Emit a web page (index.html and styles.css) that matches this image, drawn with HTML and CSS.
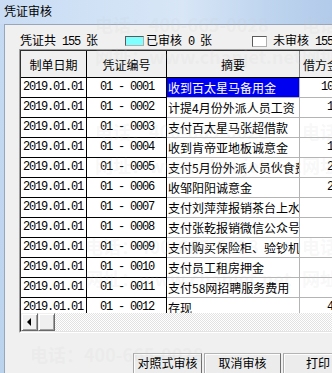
FILE: index.html
```html
<!DOCTYPE html>
<html>
<head>
<meta charset="utf-8">
<link rel="stylesheet" href="styles.css">
</head>
<body>
<div class="window">
  <div class="titlebar">凭证审核</div>
  <div class="client">
    <div class="legend">
      <span class="total">凭证共<span class="n"> 155 </span>张</span>
      <span class="swatch cyan"></span>
      <span class="lbl1">已审核<span class="n"> 0 </span>张</span>
      <span class="swatch white"></span>
      <span class="lbl2">未审核<span class="n"> 155 </span>张</span>
    </div>
    <div class="grid-outer">
      <div class="grid-inner">
        <div class="hdr">
          <div class="h h1">制单日期</div>
          <div class="h h2">凭证编号</div>
          <div class="h h3">摘要</div>
          <div class="h h4">借方金额</div>
        </div>
        <div class="rows">
          <div class="row"><div class="c c1">2019.01.01</div><div class="c c2">01 - 0001</div><div class="c c3 sel">收到百太星马备用金</div><div class="c c4">10000.00</div></div>
          <div class="row"><div class="c c1">2019.01.01</div><div class="c c2">01 - 0002</div><div class="c c3">计提4月份外派人员工资</div><div class="c c4">1500.00</div></div>
          <div class="row"><div class="c c1">2019.01.01</div><div class="c c2">01 - 0003</div><div class="c c3">支付百太星马张超借款</div><div class="c c4"></div></div>
          <div class="row"><div class="c c1">2019.01.01</div><div class="c c2">01 - 0004</div><div class="c c3">收到肯帝亚地板诚意金</div><div class="c c4">1000.00</div></div>
          <div class="row"><div class="c c1">2019.01.01</div><div class="c c2">01 - 0005</div><div class="c c3">支付5月份外派人员伙食费</div><div class="c c4">2400.00</div></div>
          <div class="row"><div class="c c1">2019.01.01</div><div class="c c2">01 - 0006</div><div class="c c3">收邹阳阳诚意金</div><div class="c c4">2000.00</div></div>
          <div class="row"><div class="c c1">2019.01.01</div><div class="c c2">01 - 0007</div><div class="c c3">支付刘萍萍报销茶台上水费</div><div class="c c4"></div></div>
          <div class="row"><div class="c c1">2019.01.01</div><div class="c c2">01 - 0008</div><div class="c c3">支付张乾报销微信公众号费</div><div class="c c4"></div></div>
          <div class="row"><div class="c c1">2019.01.01</div><div class="c c2">01 - 0009</div><div class="c c3">支付购买保险柜、验钞机</div><div class="c c4"></div></div>
          <div class="row"><div class="c c1">2019.01.01</div><div class="c c2">01 - 0010</div><div class="c c3">支付员工租房押金</div><div class="c c4"></div></div>
          <div class="row"><div class="c c1">2019.01.01</div><div class="c c2">01 - 0011</div><div class="c c3">支付58网招聘服务费用</div><div class="c c4"></div></div>
          <div class="row"><div class="c c1">2019.01.01</div><div class="c c2">01 - 0012</div><div class="c c3">存现</div><div class="c c4">4000.00</div></div>
        </div>
        <div class="hscroll">
          <div class="sb-btn"><span class="arrow-left"></span></div>
          <div class="sb-btn"></div>
          <div class="sb-track"></div>
        </div>
      </div>
    </div>
    <div class="buttons">
      <div class="btn b1">对照式审核</div>
      <div class="btn b2">取消审核</div>
      <div class="btn b3">打印</div>
    </div>
  </div>
  <div class="watermark">
    <div class="wm" style="left:95px;top:14px">电话：400-665-0028</div>
    <div class="wm" style="left:95px;top:46px">网址：www.chanjet.net</div>
    <div class="wm" style="left:302px;top:14px">电话：400-665-0028</div>
    <div class="wm" style="left:302px;top:46px">网址：www.chanjet.net</div>
    <div class="wm" style="left:95px;top:121px">电话：400-665-0028</div>
    <div class="wm" style="left:95px;top:155px">网址：www.chanjet.net</div>
    <div class="wm" style="left:302px;top:121px">电话：400-665-0028</div>
    <div class="wm" style="left:302px;top:155px">网址：www.chanjet.net</div>
    <div class="wm" style="left:85px;top:236px">电话：400-665-0028</div>
    <div class="wm" style="left:85px;top:268px">网址：www.chanjet.net</div>
    <div class="wm" style="left:302px;top:236px">电话：400-665-0028</div>
    <div class="wm" style="left:302px;top:268px">网址：www.chanjet.net</div>
    <div class="wm" style="left:30px;top:344px">电话：400-665-0028</div>
  </div>
</div>
</body>
</html>
```
FILE: styles.css
```css
html, body {
  margin: 0;
  padding: 0;
}
body {
  width: 332px;
  height: 373px;
  overflow: hidden;
  font-family: "Noto Sans CJK SC", "Noto Sans", sans-serif;
  font-size: 12px;
  color: #000;
  background: #bfd5ef;
}
.window {
  position: relative;
  width: 332px;
  height: 373px;
  display: flex;
  flex-direction: column;
  overflow: hidden;
  background: linear-gradient(180deg, #c6dbf3 0%, #bcd3ee 100%);
}
.titlebar {
  flex: none;
  height: 24px;
  line-height: 22px;
  padding-left: 4px;
  background: linear-gradient(90deg, #c9dcf3 0%, #d2e3f6 35%, #d8e6f6 55%, #bfd5ef 80%, #b2cbea 100%);
}
.client {
  flex: 1;
  margin-left: 4px;
  border-left: 1px solid #97a6ba;
  border-top: 1px solid #97a6ba;
  background: #f0f0f0;
  overflow: hidden;
  display: flex;
  flex-direction: column;
}
.n {
  font-family: "Liberation Mono", monospace;
  font-size: 12px;
  letter-spacing: -1.2px;
}
.legend {
  flex: none;
  height: 16px;
  margin-top: 8px;
  padding-left: 15px;
  display: flex;
  align-items: center;
  white-space: nowrap;
  line-height: 16px;
}
.total {
  width: 105px;
  flex: none;
}
.swatch {
  flex: none;
  height: 10px;
  box-sizing: border-box;
  border: 1px solid;
  border-color: #5a5a5a #b0b0b0 #b0b0b0 #5a5a5a;
}
.swatch.cyan {
  width: 19px;
  background: #80ffff;
}
.swatch.white {
  width: 15px;
  height: 11px;
  background: #fff;
}
.lbl1 {
  width: 106px;
  flex: none;
  margin-left: 2px;
}
.lbl2 {
  flex: none;
  margin-left: 6px;
}
.grid-outer {
  flex: none;
  width: 400px;
  margin-left: 14px;
  border: 1px solid;
  border-color: #a0a0a0 #ffffff #ffffff #a0a0a0;
}
.grid-inner {
  border: 1px solid;
  border-color: #303030 #e3e3e3 #e3e3e3 #303030;
}
.hdr, .row {
  display: grid;
  grid-template-columns: 66px 80px 133px 80px;
}
.hdr {
  height: 27px;
  box-sizing: border-box;
  border-bottom: 1px solid #000;
  background: #f0f0f0;
}
.h {
  display: flex;
  align-items: center;
  justify-content: center;
  border-right: 1px solid #000;
  white-space: nowrap;
  overflow: hidden;
}
.h3 {
  border-right-color: #808080;
}
.h4 {
  justify-content: flex-start;
  padding-left: 3px;
}
.rows {
  height: 235px;
  overflow: hidden;
  background: #fff;
}
.c {
  height: 20px;
  box-sizing: border-box;
  line-height: 19px;
  white-space: nowrap;
  overflow: hidden;
}
.c1, .c2 {
  border-right: 1px solid #000;
  border-bottom: 1px solid #000;
  font-family: "Liberation Mono", monospace;
  letter-spacing: -1.2px;
}
.c1 {
  padding-left: 2px;
}
.c2 {
  text-align: center;
  padding-left: 1px;
}
.c3, .c4 {
  border-right: 1px solid #b4b4b4;
  border-bottom: 1px solid #b4b4b4;
}
.c3 {
  padding-left: 1px;
}
.c3.sel {
  background: #0000f0;
  color: #fff;
}
.c4 {
  text-align: right;
  padding-right: 10px;
  font-family: "Liberation Mono", monospace;
  letter-spacing: -1.2px;
}
.hscroll {
  height: 18px;
  display: flex;
  background: repeating-conic-gradient(#ffffff 0 25%, #e2e2e2 0 50%) 0 0 / 2px 2px;
}
.sb-btn {
  flex: none;
  width: 17px;
  height: 18px;
  box-sizing: border-box;
  background: #f0f0f0;
  border: 1px solid;
  border-color: #f0f0f0 #696969 #696969 #f0f0f0;
  box-shadow: inset 1px 1px 0 #fff, inset -1px -1px 0 #a0a0a0;
  display: flex;
  align-items: center;
  justify-content: center;
}
.arrow-left {
  width: 0;
  height: 0;
  border-top: 4px solid transparent;
  border-bottom: 4px solid transparent;
  border-right: 4px solid #000;
  margin-left: -2px;
}
.sb-track {
  flex: 1;
}
.buttons {
  flex: none;
  display: flex;
  gap: 2px;
  margin-top: 20px;
  margin-left: 128px;
  white-space: nowrap;
}
.btn {
  flex: none;
  height: 23px;
  box-sizing: border-box;
  line-height: 18px;
  text-align: center;
  background: #ececec;
  border: 1px solid;
  border-color: #b4b4b4 #6e6e6e #6e6e6e #a8a8a8;
  box-shadow: inset 1px 1px 0 #fdfdfd;
}
.b1 { width: 69px; }
.b2 { width: 77px; }
.b3 { width: 70px; }
.watermark {
  position: absolute;
  inset: 0;
  pointer-events: none;
}
.wm {
  position: absolute;
  white-space: nowrap;
  font-family: "Noto Sans CJK SC", sans-serif;
  font-weight: bold;
  font-size: 18px;
  line-height: 20px;
  color: rgba(200, 200, 200, 0.13);
}
```
